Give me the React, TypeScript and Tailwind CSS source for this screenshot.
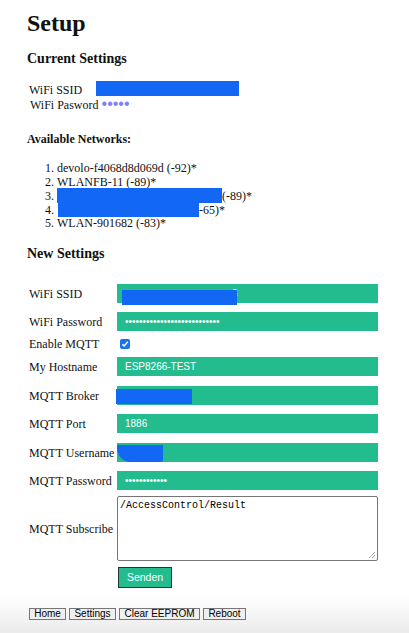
import React from "react";

const BLUE = "bg-[#1267f5]";

const Row = ({
  label,
  mt,
  children,
  h = "h-[19px]",
}: {
  label: string;
  mt: string;
  children: React.ReactNode;
  h?: string;
}) => (
  <div className={`flex items-center ${mt} ${h}`}>
    <div className="w-[90px] pl-[2px] text-[12px] leading-[14px] whitespace-nowrap">{label}</div>
    {children}
  </div>
);

const Field = ({ children }: { children?: React.ReactNode }) => (
  <div className="relative flex items-center w-[261px] h-full bg-[#23bc8f] pl-[8px] text-[10px] leading-[12px] text-white font-['Liberation_Sans',Arial,sans-serif] whitespace-nowrap">
    {children}
  </div>
);

export default function App() {
  return (
    <div className="w-[409px] h-[633px] bg-white text-[#111] font-['Liberation_Serif','Times_New_Roman',serif] overflow-hidden">
      <div className="px-[27px] flex flex-col">
        <h1 className="mt-[9px] text-[24px] leading-[28px] font-bold">Setup</h1>
        <h2 className="mt-[14.3px] text-[14px] leading-[16px] font-bold">Current Settings</h2>

        <div className="mt-[15.7px] flex h-[15px] text-[12px] leading-[15px]">
          <div className="w-[69px] pl-[2px]">WiFi SSID</div>
          <div className={`${BLUE} w-[143px] h-[15px] -mt-[2px]`} />
        </div>
        <div className="mt-[0.5px] h-[15.5px] pl-[3px] text-[12px] leading-[15.5px] whitespace-nowrap">
          WiFi Pasword{" "}
          <span className="font-['Liberation_Sans',Arial,sans-serif] text-[16px] leading-[10px] text-[#8080f8]">•••••</span>
        </div>

        <h3 className="mt-[18px] text-[12px] leading-[14px] font-bold">Available Networks:</h3>
        <ol className="mt-[16.4px] pl-[30px] list-decimal text-[12px] leading-[13.75px]">
          <li className="h-[13.75px]">devolo-f4068d8d069d (-92)*</li>
          <li className="h-[13.75px]">WLANFB-11 (-89)*</li>
          <li className="h-[13.75px] whitespace-nowrap">
            <span className={`relative -top-[2px] inline-block align-top ${BLUE} w-[165px] h-[15px]`} />
            (-89)*
          </li>
          <li className="h-[13.75px] whitespace-nowrap">
            <span className={`relative -top-[1px] inline-block align-top ${BLUE} w-[141px] h-[14px] ml-[1px]`} />
            -65)*
          </li>
          <li className="h-[13.75px]">WLAN-901682 (-83)*</li>
        </ol>

        <h2 className="mt-[15.2px] text-[14px] leading-[16px] font-bold">New Settings</h2>

        <div className="mt-[21.7px] flex flex-col">
          <Row label="WiFi SSID" mt="mt-0">
            <Field>
              <div className={`relative z-10 ${BLUE} w-[115px] h-[15px] -ml-[3px] mt-[7px]`} />
              <span className="-ml-[5px]">3</span>
            </Field>
          </Row>
          <Row label="WiFi Password" mt="mt-[9px]">
            <Field>•••••••••••••••••••••••••••</Field>
          </Row>
          <Row label="Enable MQTT" mt="mt-[6px]" h="h-[13px]">
            <div className="ml-[3px] w-[10px] h-[10px] rounded-[2px] bg-[#1a73e8] flex items-center justify-center">
              <svg width="8" height="8" viewBox="0 0 8 8">
                <path d="M1.3 4.2 L3.2 6 L6.8 1.8" fill="none" stroke="white" strokeWidth="1.5" />
              </svg>
            </div>
          </Row>
          <Row label="My Hostname" mt="mt-[7px]">
            <Field>ESP8266-TEST</Field>
          </Row>
          <Row label="MQTT Broker" mt="mt-[10px]">
            <Field>
              <div className={`${BLUE} w-[76px] h-[15px] -ml-[9px] mt-[1px]`} />
            </Field>
          </Row>
          <Row label="MQTT Port" mt="mt-[9px]">
            <Field>1886</Field>
          </Row>
          <Row label="MQTT Username" mt="mt-[10px]">
            <Field>
              <div className={`${BLUE} w-[46px] h-[17px] -ml-[8px] rounded-bl-[14px] rounded-br-[2px] mt-[1px]`} />
            </Field>
          </Row>
          <Row label="MQTT Password" mt="mt-[9px]">
            <Field>••••••••••••</Field>
          </Row>
          <Row label="MQTT Subscribe" mt="mt-[6px]" h="h-[65px]">
            <div className="relative w-[261px] h-full border border-[#767676] rounded-[2px] pt-[3px] pl-[2px] font-['Liberation_Mono','Courier_New',monospace] text-[10px] leading-[12px] text-black">
              /AccessControl/Result
              <svg className="absolute right-[1px] bottom-[1px]" width="8" height="8" viewBox="0 0 8 8">
                <path d="M7 1 L1 7 M7 4 L4 7" stroke="#555" strokeWidth="0.8" strokeDasharray="1 0.6" />
              </svg>
            </div>
          </Row>
          <div className="mt-[6px] pl-[91px] flex">
            <button className="w-[54px] h-[21px] bg-[#23bc8f] border border-[#26352f] text-white text-[10.5px] font-medium font-['Liberation_Sans',Arial,sans-serif] leading-[19px]">
              Senden
            </button>
          </div>
        </div>
      </div>

      <div className="mt-[8px] h-[37px] pt-[12px] pl-[29px] flex items-start gap-[3px] bg-linear-to-b from-white to-[#ebebeb] font-['Liberation_Sans',Arial,sans-serif] text-[10px] leading-[10px]">
        {[
          ["Home", "w-[37px]"],
          ["Settings", "w-[47px]"],
          ["Clear EEPROM", "w-[81px]"],
          ["Reboot", "w-[43px]"],
        ].map(([t, w]) => (
          <button key={t} className={`${w} h-[12px] bg-[#efefef] border border-[#767676] text-black flex items-center justify-center`}>
            {t}
          </button>
        ))}
      </div>
    </div>
  );
}
